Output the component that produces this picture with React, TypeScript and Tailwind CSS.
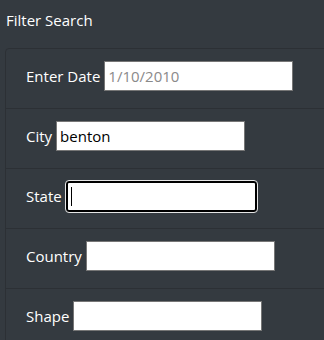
import React from 'react';

const fields = [
  { label: 'Enter Date', value: '1/10/2010', muted: true },
  { label: 'City', value: 'benton' },
  { label: 'State', value: '', focused: true },
  { label: 'Country', value: '' },
  { label: 'Shape', value: '' },
];

export default function App() {
  return (
    <div
      className="w-[324px] h-[340px] overflow-hidden bg-[#343a40] text-white"
      style={{ fontFamily: '"Open Sans", "Noto Sans", sans-serif' }}
    >
      <h5 className="pl-[6px] pt-[8px] h-[48px] text-[15px] leading-[24px]">Filter Search</h5>
      <div className="ml-[5px] w-[340px] border border-[#2c3035] rounded-[4px]">
        {fields.map((f, idx) => (
          <div key={idx} className="h-[60px] border-b border-[#2c3035] px-5 pt-3">
            <div className="flex items-center h-[30px] text-[15px]">
              <span>{f.label}</span>
              {f.focused ? (
                <div className="relative ml-1 w-[191px] h-[31px] rounded-[3px] border-2 border-black bg-white outline outline-1 outline-[#e5e5e5]">
                  <div className="absolute left-[3px] top-[4px] w-px h-[19px] bg-black" />
                </div>
              ) : (
                <input
                  readOnly
                  value={f.value}
                  className={`ml-1 w-[189px] h-[30px] border border-[#767676] bg-white px-[3px] text-[15px] outline-none ${
                    f.muted ? 'text-[#8a8a8a]' : 'text-black'
                  }`}
                />
              )}
            </div>
          </div>
        ))}
      </div>
    </div>
  );
}
